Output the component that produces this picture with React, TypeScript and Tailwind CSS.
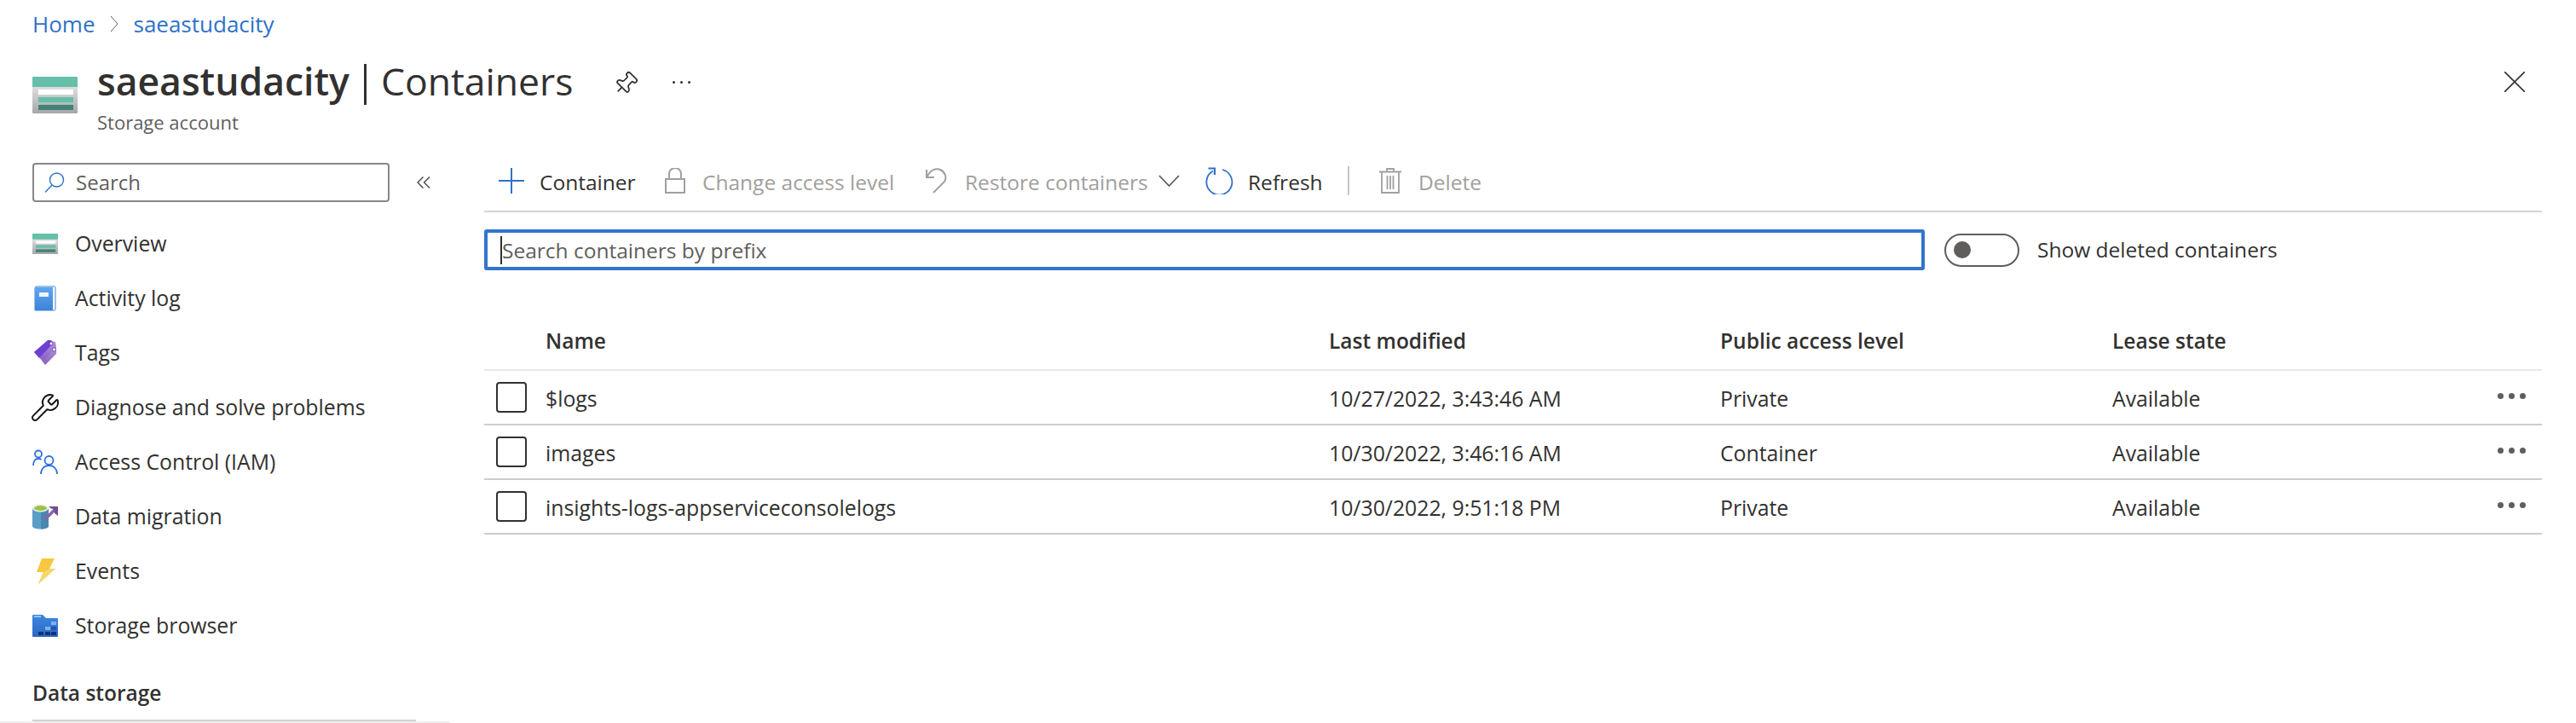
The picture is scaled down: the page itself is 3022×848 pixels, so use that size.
import { Pin, Wrench } from 'lucide-react';

const rows = [
  { name: '$logs', modified: '10/27/2022, 3:43:46 AM', access: 'Private', lease: 'Available' },
  { name: 'images', modified: '10/30/2022, 3:46:16 AM', access: 'Container', lease: 'Available' },
  { name: 'insights-logs-appserviceconsolelogs', modified: '10/30/2022, 9:51:18 PM', access: 'Private', lease: 'Available' },
];

function StorageIcon({ className, id }: { className: string; id: string }) {
  return (
    <svg viewBox="0 0 53 43" className={className} preserveAspectRatio="none">
      <defs>
        <linearGradient id={id} x1="0" y1="0" x2="0" y2="1">
          <stop offset="0" stopColor="#f4f4f4" />
          <stop offset="1" stopColor="#a6a6a6" />
        </linearGradient>
      </defs>
      <rect width="53" height="43" rx="1" fill={`url(#${id})`} />
      <path d="M1 0h51a1 1 0 0 1 1 1v11H0V1a1 1 0 0 1 1-1z" fill="#65bfa9" />
      <rect x="7" y="15" width="41" height="6" fill="#ffffff" />
      <rect x="7" y="24" width="41" height="6" fill="#65bfa9" />
      <rect x="7" y="33" width="41" height="6" fill="#41827a" />
    </svg>
  );
}

function BookIcon() {
  return (
    <svg viewBox="0 0 30 30" className="w-[30px] h-[30px]">
      <defs>
        <linearGradient id="book" x1="0" y1="0" x2="0" y2="1">
          <stop offset="0" stopColor="#5ea7f0" />
          <stop offset="1" stopColor="#3d83d6" />
        </linearGradient>
      </defs>
      <path d="M3 3a2 2 0 0 1 2-2h20.5a1.5 1.5 0 0 1 1.5 1.5v25a1.5 1.5 0 0 1-1.5 1.5H3z" fill="#ffffff" stroke="#3d83d6" strokeWidth="1" />
      <path d="M3 3.5A1.5 1.5 0 0 1 4.5 2H24v27H3z" fill="url(#book)" />
      <rect x="8" y="8" width="11" height="5" rx="0.5" fill="#f1f4f8" />
    </svg>
  );
}

function TagIcon() {
  return (
    <svg viewBox="0 0 30 30" className="w-[30px] h-[30px]">
      <defs>
        <linearGradient id="tag" x1="0" y1="0" x2="0" y2="1">
          <stop offset="0" stopColor="#b796e0" />
          <stop offset="1" stopColor="#8460bd" />
        </linearGradient>
      </defs>
      <path d="M3 14L15 29l13-13V8z" fill="url(#tag)" />
      <path d="M2 14L19 0l8 2 1 6-14 16z" fill="url(#tag)" />
      <path d="M2 14L18 0h4l2 4L8 21z" fill="#6e3fd0" />
      <circle cx="22" cy="4" r="2" fill="#ffffff" stroke="#5b2fa8" strokeWidth="0.8" />
      <circle cx="25.5" cy="11" r="2" fill="#ffffff" stroke="#5b2fa8" strokeWidth="0.8" />
    </svg>
  );
}

function PeopleIcon() {
  return (
    <svg viewBox="0 0 30 30" className="w-[30px] h-[30px]" fill="none" stroke="#2d6fdc" strokeWidth="1.8">
      <circle cx="7" cy="5.5" r="4" />
      <path d="M1 19c0-5 2.5-8 6-8 1.5 0 2.7.4 3.6 1.2" />
      <circle cx="19.5" cy="13" r="5" />
      <path d="M10 29c0-6 4-10 9.5-10S29 23 29 29" />
    </svg>
  );
}

function MigrationIcon() {
  return (
    <svg viewBox="0 0 30 30" className="w-[30px] h-[30px]">
      <path d="M0 5h19v21c0 2-4 3.500-9.500 3.500S0 28 0 26z" fill="#5a9dc9" />
      <path d="M10 29.500V5h9v21c0 2-4 3.500-9 3.500z" fill="#4a86ad" />
      <ellipse cx="9.500" cy="5" rx="9.500" ry="4.500" fill="#e8f0e8" />
      <ellipse cx="9.500" cy="5" rx="7.500" ry="3" fill="#9dc243" />
      <path d="M15 18L26 7" stroke="#8a62a8" strokeWidth="3.500" />
      <path d="M19 3h11v11l-4-3-1-5-3-.5z" fill="#754a96" />
    </svg>
  );
}

function BoltIcon() {
  return (
    <svg viewBox="0 0 30 30" className="w-[30px] h-[30px]">
      <path d="M11 0h15l-6 12h7L7 30l6-14H5z" fill="#f7c83f" />
      <path d="M20 12h7L7 30l6-14z" fill="#f5d76a" />
    </svg>
  );
}

function FolderIcon() {
  return (
    <svg viewBox="0 0 30 26" className="w-[30px] h-[26px]">
      <defs>
        <linearGradient id="folder" x1="0" y1="0" x2="0" y2="1">
          <stop offset="0" stopColor="#3f88e0" />
          <stop offset="1" stopColor="#2a67c4" />
        </linearGradient>
      </defs>
      <path d="M0 1a1 1 0 0 1 1-1h11l4 4h13a1 1 0 0 1 1 1v20a1 1 0 0 1-1 1H1a1 1 0 0 1-1-1z" fill="url(#folder)" />
      <rect x="2" y="1.500" width="8" height="1.500" fill="#b4d4f5" />
      <rect x="7" y="20" width="6" height="4" fill="#0f3378" />
      <rect x="15" y="20" width="6" height="4" fill="#0f3378" />
      <rect x="22" y="20" width="6" height="4" fill="#0f3378" />
      <rect x="15" y="14" width="6" height="4" fill="#7fb0ec" />
      <rect x="22" y="14" width="6" height="4" fill="#1f56a8" />
      <rect x="22" y="8" width="6" height="4" fill="#7fb0ec" />
    </svg>
  );
}

const navItems = [
  { label: 'Overview', icon: <StorageIcon id="nav-storage" className="w-[30px] h-[24px]" /> },
  { label: 'Activity log', icon: <BookIcon /> },
  { label: 'Tags', icon: <TagIcon /> },
  { label: 'Diagnose and solve problems', icon: <Wrench size={36} strokeWidth={1.3} color="#111111" className="shrink-0" /> },
  { label: 'Access Control (IAM)', icon: <PeopleIcon /> },
  { label: 'Data migration', icon: <MigrationIcon /> },
  { label: 'Events', icon: <BoltIcon /> },
  { label: 'Storage browser', icon: <FolderIcon /> },
];

export default function App() {
  return (
    <div className="h-[848px] w-[3022px] overflow-hidden bg-white text-[24.5px] text-[#323130] font-['Open_Sans',sans-serif]">
      <nav className="h-[56px] pl-[38px] flex items-center text-[26px] text-[#2f72c8]">
        <span>Home</span>
        <svg viewBox="0 0 10 20" className="w-[10px] h-[20px] ml-[18px] mr-[17px]" fill="none" stroke="#605e5c" strokeWidth="1">
          <path d="M1 1l8 9-8 9" />
        </svg>
        <span>saeastudacity</span>
      </nav>

      <header className="flex items-start pl-[38px] pr-[60px] pt-[17px] pb-[32px]">
        <StorageIcon id="head-storage" className="w-[53px] h-[43px] mt-[17px] mr-[23px]" />
        <div>
          <h1 className="text-[44.5px] leading-[48px] -mt-[2px] flex items-center">
            <span className="font-semibold">saeastudacity</span>
            <span className="mx-[17px] w-[3px] h-[48px] bg-[#323130] self-start mt-[4px] -mb-[4px]" />
            <span>Containers</span>
          </h1>
          <div className="mt-[8px] leading-[32px] text-[22px] text-[#605e5c]">Storage account</div>
        </div>
        <Pin size={30} strokeWidth={1.4} className="rotate-45 ml-[46px] mt-[10px]" />
        <div className="flex gap-[6px] ml-[40px] mt-[22px]">
          <span className="w-[3px] h-[3px] rounded-full bg-[#323130]" />
          <span className="w-[3px] h-[3px] rounded-full bg-[#323130]" />
          <span className="w-[3px] h-[3px] rounded-full bg-[#323130]" />
        </div>
        <svg viewBox="0 0 24 24" className="w-[24px] h-[24px] ml-auto mt-[11px]" fill="none" stroke="#323130" strokeWidth="1.6">
          <path d="M0 0l24 24M24 0L0 24" />
        </svg>
      </header>

      <div className="flex items-start">
        <aside className="w-[528px] shrink-0">
          <div className="pl-[38px]">
            <div className="flex items-center w-[419px] h-[46px] border-2 border-[#8a8886] rounded-[4px] pl-[12px]">
              <svg viewBox="0 0 24 24" className="w-[24px] h-[24px] mr-[13px]" fill="none" stroke="#2f72c8" strokeWidth="1.4">
                <circle cx="14.500" cy="9" r="8" />
                <path d="M9 15L1 23.500" />
              </svg>
              <span className="text-[24px] text-[#605e5c]">Search</span>
            </div>
            <ul className="mt-[17px] text-[24.8px]">
              {navItems.map((item) => (
                <li key={item.label} className="h-[64px] flex items-center">
                  <span className="w-[30px] h-[30px] flex items-center justify-center mr-[20px]">{item.icon}</span>
                  {item.label}
                </li>
              ))}
            </ul>
            <div className="mt-[31px] leading-[32px] font-semibold">Data storage</div>
            <div className="mt-[15px] w-[450px] h-[2px] bg-[#d2d0ce]" />
          </div>
          <div className="h-[2px] bg-[#eeeeee]" />
        </aside>

        <svg viewBox="0 0 16 14" className="w-[16px] h-[14px] -ml-[39px] mt-[16px]" fill="none" stroke="#484644" strokeWidth="1.4">
          <path d="M7.500 0.500L1 7l6.500 6.500M15 0.500L8.500 7l6.500 6.500" />
        </svg>

        <main className="w-[2414px] ml-[63px]">
          <div className="h-[58px] border-b-2 border-[#d4d4d4] pl-[17px] pt-[6px]">
            <div className="flex items-center h-[30px]">
              <svg viewBox="0 0 30 30" className="w-[30px] h-[30px] mr-[18px]" fill="none" stroke="#2f72c8" strokeWidth="2">
                <path d="M15 0v30M0 15h30" />
              </svg>
              <span className="w-[111px] pt-[4px] whitespace-nowrap">Container</span>

              <svg viewBox="0 0 24 30" className="w-[24px] h-[30px] ml-[36px] mr-[20px]" fill="none" stroke="#a19f9d" strokeWidth="2">
                <rect x="1" y="13" width="22" height="16" />
                <path d="M5 13V7a7 7 0 0 1 14 0v6" />
              </svg>
              <span className="w-[226px] pt-[4px] whitespace-nowrap text-[#a19f9d]">Change access level</span>

              <svg viewBox="0 0 25 30" className="w-[25px] h-[30px] ml-[36px] mr-[21px]" fill="none" stroke="#a19f9d" strokeWidth="2">
                <path d="M1 2v9h9M1.500 11C5 2 12 0 17 2c6 3 8 9 5 14L9 29" />
              </svg>
              <span className="w-[211px] pt-[4px] whitespace-nowrap text-[#a19f9d]">Restore containers</span>

              <svg viewBox="0 0 25 14" className="w-[25px] h-[14px] ml-[16px]" fill="none" stroke="#605e5c" strokeWidth="1.800">
                <path d="M1 1l11.500 12L24 1" />
              </svg>

              <svg viewBox="0 0 33 32" className="w-[33px] h-[32px] ml-[30px] mr-[17px]" fill="none" stroke="#2f72c8" strokeWidth="1.800">
                <path d="M20 3a15 15 0 1 1-11 1.500" />
                <path d="M3.500 1.500H11V9" strokeWidth="2.200" />
              </svg>
              <span className="w-[84px] pt-[4px] whitespace-nowrap">Refresh</span>

              <span className="w-[2px] h-[34px] bg-[#c8c6c4] ml-[33px]" />

              <svg viewBox="0 0 26 30" className="w-[26px] h-[30px] ml-[35px] mr-[20px]" fill="none" stroke="#a19f9d" strokeWidth="1.800">
                <path d="M0 4.500h26M9 4V1h8v3M3 5v24h20V5M9.500 9v16M13 9v16M16.500 9v16" />
              </svg>
              <span className="pt-[4px] whitespace-nowrap text-[#a19f9d]">Delete</span>
            </div>
          </div>

          <div className="flex items-center mt-[20px]">
            <div className="w-[1690px] h-[48px] border-4 border-[#3275cc] rounded-[3px] pl-[15px] flex items-center text-[#605e5c]">
              <span className="border-l-2 border-[#323130] leading-[33px]">Search containers by prefix</span>
            </div>
            <span className="ml-[23px] w-[88px] h-[39px] rounded-full border-2 border-[#605e5c] flex items-center pl-[9px]">
              <span className="w-[20px] h-[20px] rounded-full bg-[#605e5c]" />
            </span>
            <span className="ml-[21px]">Show deleted containers</span>
          </div>

          <div className="mt-[50px] h-[68px] border-b-2 border-[#e8e8e8] grid grid-cols-[72px_919px_459px_460px_452px_52px] items-center font-semibold">
            <span />
            <span>Name</span>
            <span>Last modified</span>
            <span>Public access level</span>
            <span>Lease state</span>
            <span />
          </div>
          {rows.map((row) => (
            <div key={row.name} className="h-[64px] border-b-2 border-[#cccccc] grid grid-cols-[72px_919px_459px_460px_452px_52px] items-center text-[24.8px]">
              <span className="ml-[14px] w-[36px] h-[36px] rounded-[4px] border-2 border-[#323130]" />
              <span className="pt-[4px]">{row.name}</span>
              <span className="pt-[4px]">{row.modified}</span>
              <span className="pt-[4px]">{row.access}</span>
              <span className="pt-[4px]">{row.lease}</span>
              <span className="flex gap-[6px] -mt-[4px]">
                <span className="w-[7px] h-[7px] rounded-full bg-[#605e5c]" />
                <span className="w-[7px] h-[7px] rounded-full bg-[#605e5c]" />
                <span className="w-[7px] h-[7px] rounded-full bg-[#605e5c]" />
              </span>
            </div>
          ))}
        </main>
      </div>
    </div>
  );
}
